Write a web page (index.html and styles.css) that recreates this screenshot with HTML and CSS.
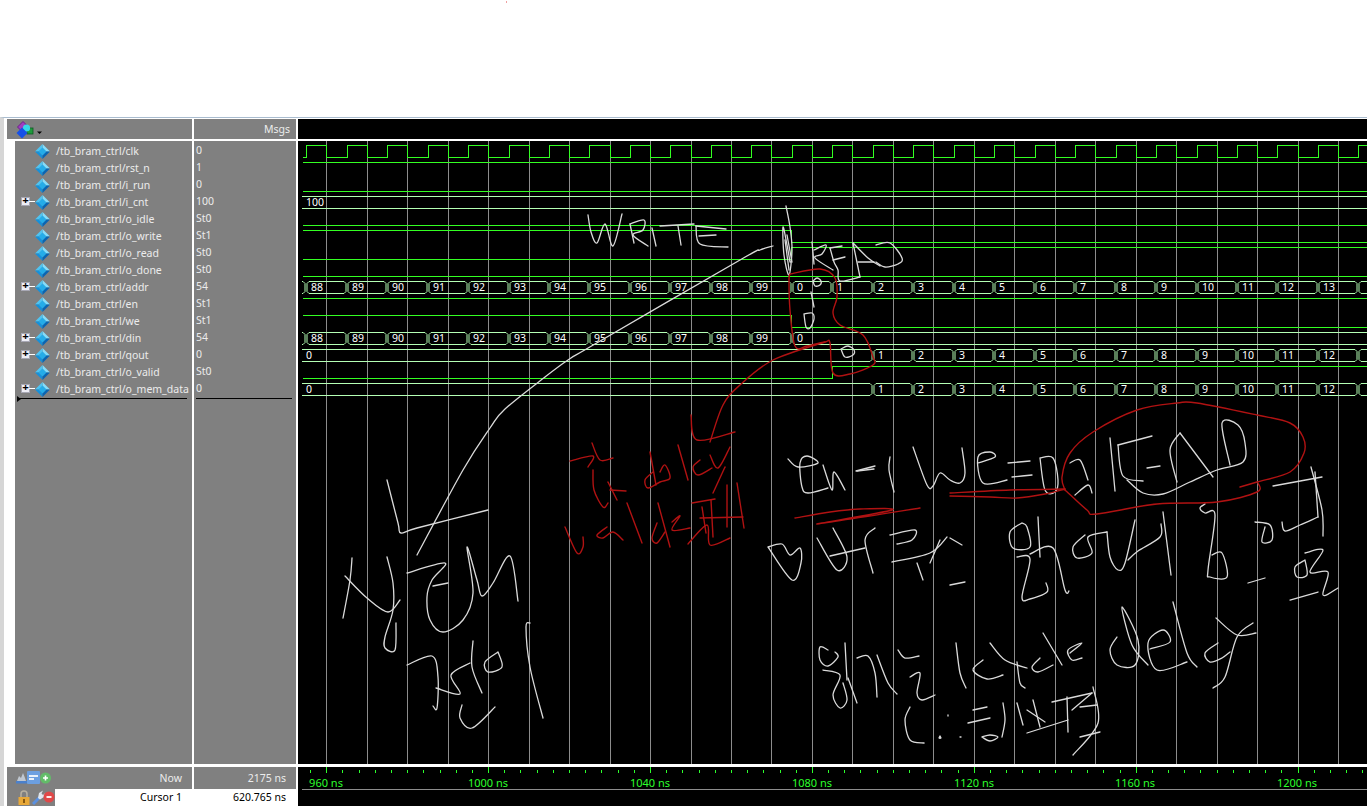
FILE: index.html
```html
<!DOCTYPE html>
<html lang="en">
<head>
    <meta charset="UTF-8">
    <meta name="viewport" content="width=device-width, initial-scale=1.0">
    <title>Wave</title>
    <link rel="stylesheet" href="styles.css">
</head>
<body>
    <svg class="defs" width="0" height="0">
        <symbol id="dia" viewBox="0 0 15 15">
            <polygon points="7.5,0 15,7.5 11,7.5 7.5,4" fill="#86dcfa"/>
            <polygon points="7.5,0 0,7.5 4,7.5 7.5,4" fill="#4fc4f2"/>
            <polygon points="0,7.5 7.5,15 7.5,11 4,7.5" fill="#1590da"/>
            <polygon points="15,7.5 7.5,15 7.5,11 11,7.5" fill="#0a65b2"/>
            <polygon points="7.5,3.5 11.5,7.5 7.5,11.5 3.5,7.5" fill="#25ace8"/>
        </symbol>
    </svg>

    <div class="dot"></div>

    <div class="window">
        <div class="head head-names">
            <svg class="layers" width="28" height="18" viewBox="0 0 28 18">
                <polygon points="7,0.5 12.5,6 7,11.5 1.5,6" fill="#a03cc0" stroke="#6a1f8a"/>
                <rect x="11" y="7" width="6" height="6" fill="#1f9a3c" stroke="#0a5a20" stroke-width="0.8"/>
                <circle cx="10.5" cy="7" r="3.6" fill="#35d8e8"/>
                <polygon points="6,6.5 11.5,12 6,17.5 0.5,12" fill="#1550e8"/>
                <polygon points="21,10.5 26,10.5 23.5,13" fill="#000"/>
            </svg>
        </div>
        <div class="head head-msgs">Msgs</div>
        <div class="head head-wave"></div>

        <div class="names">
            <div class="sig"><span class="slot"></span><svg class="dia"><use href="#dia"/></svg><span>/tb_bram_ctrl/clk</span></div>
            <div class="sig"><span class="slot"></span><svg class="dia"><use href="#dia"/></svg><span>/tb_bram_ctrl/rst_n</span></div>
            <div class="sig"><span class="slot"></span><svg class="dia"><use href="#dia"/></svg><span>/tb_bram_ctrl/i_run</span></div>
            <div class="sig"><span class="slot"><span class="plus">+</span></span><svg class="dia"><use href="#dia"/></svg><span>/tb_bram_ctrl/i_cnt</span></div>
            <div class="sig"><span class="slot"></span><svg class="dia"><use href="#dia"/></svg><span>/tb_bram_ctrl/o_idle</span></div>
            <div class="sig"><span class="slot"></span><svg class="dia"><use href="#dia"/></svg><span>/tb_bram_ctrl/o_write</span></div>
            <div class="sig"><span class="slot"></span><svg class="dia"><use href="#dia"/></svg><span>/tb_bram_ctrl/o_read</span></div>
            <div class="sig"><span class="slot"></span><svg class="dia"><use href="#dia"/></svg><span>/tb_bram_ctrl/o_done</span></div>
            <div class="sig"><span class="slot"><span class="plus">+</span></span><svg class="dia"><use href="#dia"/></svg><span>/tb_bram_ctrl/addr</span></div>
            <div class="sig"><span class="slot"></span><svg class="dia"><use href="#dia"/></svg><span>/tb_bram_ctrl/en</span></div>
            <div class="sig"><span class="slot"></span><svg class="dia"><use href="#dia"/></svg><span>/tb_bram_ctrl/we</span></div>
            <div class="sig"><span class="slot"><span class="plus">+</span></span><svg class="dia"><use href="#dia"/></svg><span>/tb_bram_ctrl/din</span></div>
            <div class="sig"><span class="slot"><span class="plus">+</span></span><svg class="dia"><use href="#dia"/></svg><span>/tb_bram_ctrl/qout</span></div>
            <div class="sig"><span class="slot"></span><svg class="dia"><use href="#dia"/></svg><span>/tb_bram_ctrl/o_valid</span></div>
            <div class="sig"><span class="slot"><span class="plus">+</span></span><svg class="dia"><use href="#dia"/></svg><span>/tb_bram_ctrl/o_mem_data</span></div>
            <div class="endline endline-names"></div>
        </div>

        <div class="values">
            <div class="val">0</div>
            <div class="val">1</div>
            <div class="val">0</div>
            <div class="val">100</div>
            <div class="val">St0</div>
            <div class="val">St1</div>
            <div class="val">St0</div>
            <div class="val">St0</div>
            <div class="val">54</div>
            <div class="val">St1</div>
            <div class="val">St1</div>
            <div class="val">54</div>
            <div class="val">0</div>
            <div class="val">St0</div>
            <div class="val">0</div>
            <div class="endline endline-values"></div>
        </div>

        <div class="wave">
            <svg id="waves" class="wave-svg" viewBox="298 141 1069 623"></svg>
        </div>

        <div class="foot foot-names">
            <div class="foot-row now">
                <div class="tools tools-now">
                    <svg width="36" height="14" viewBox="0 0 36 14">
                        <path d="M1 10 L3 5 L5 7 L7 2 L9 7 L10 10 Z" fill="#c0c8d2"/>
                        <rect x="0" y="10" width="11" height="2.5" fill="#4a80cc"/>
                        <rect x="11" y="0" width="13" height="13" rx="1" fill="#6c9fe0"/>
                        <rect x="13" y="4" width="9" height="2" fill="#e8f0fa"/>
                        <rect x="13" y="7" width="5" height="2" fill="#e8f0fa"/>
                        <circle cx="29.5" cy="7" r="5.5" fill="#62bc68"/>
                        <path d="M27 7 H32 M29.5 4.5 V9.5" stroke="#fff" stroke-width="1.6"/>
                    </svg>
                </div>
                <div class="lbl">Now</div>
            </div>
            <div class="foot-row cursor">
                <div class="tools tools-cursor">
                    <svg width="37" height="15" viewBox="0 0 37 15">
                        <path d="M3 7 V4 A3 3 0 0 1 9 4 V7" fill="none" stroke="#b8b0a0" stroke-width="1.5"/>
                        <rect x="0.5" y="7" width="11" height="8" fill="#e8a838"/>
                        <rect x="5" y="9" width="2" height="4" fill="#8a5a10"/>
                        <path d="M15 14 L22 7" stroke="#5a90e0" stroke-width="3"/>
                        <path d="M20 8 L21 3 L25 0.5 L23.5 3.5 L25 5 L27.5 3 L26 7 L22 9.5 Z" fill="#dfe6ee"/>
                        <circle cx="31" cy="7" r="5.5" fill="#e04848"/>
                        <path d="M28.5 7 H33.5" stroke="#fff" stroke-width="1.8"/>
                    </svg>
                </div>
                <div class="lbl">Cursor 1</div>
            </div>
        </div>
        <div class="foot foot-values">
            <div class="foot-row now"><div class="lbl">2175 ns</div></div>
            <div class="foot-row cursor"><div class="lbl">620.765 ns</div></div>
        </div>
        <div class="foot foot-wave">
            <svg id="scale" class="scale-svg" viewBox="298 767 1069 39"></svg>
        </div>
    </div>

    <script src="waves.js"></script>
</body>
</html>
```

FILE: styles.css
```css
html, body {
    margin: 0;
    height: 806px;
    overflow: hidden;
    background: #fff;
}

body {
    display: flex;
    flex-direction: column;
    font-family: "Noto Sans", "Liberation Sans", sans-serif;
    font-size: 10.5px;
    color: #ececec;
}

.defs {
    position: absolute;
}

.dot {
    position: absolute;
    left: 506px;
    top: 1px;
    width: 1px;
    height: 2px;
    background: #f0a0a0;
}

.window {
    margin-top: 117px;
    flex: 1;
    min-height: 0;
    display: grid;
    grid-template-columns: 185px 102px 1fr;
    grid-template-rows: 20px 623px 40px;
    gap: 2px;
    border-top: 1px solid #a9bccf;
    border-left: 4px solid #d6d6d6;
    padding-top: 1px;
    padding-left: 3px;
    background: #fff;
}

.head {
    background: #808080;
}

.head-names {
    padding: 2px 0 0 9px;
}

.head-msgs {
    text-align: right;
    padding: 3px 6px 0 0;
}

.head-wave {
    background: #000;
}

.names {
    background: #808080;
    border-left: 8px solid #fff;
    padding-top: 1px;
}

.sig {
    height: 17px;
    display: flex;
    align-items: center;
    padding-left: 6px;
    white-space: nowrap;
}

.slot {
    width: 14px;
    height: 15px;
    flex: none;
    display: flex;
    align-items: center;
    position: relative;
}

.slot:has(.plus)::after {
    content: "";
    position: absolute;
    left: 8px;
    right: 0;
    top: 7px;
    height: 1px;
    background: #fff;
}

.plus {
    width: 9px;
    height: 9px;
    background: #eeeef6;
    color: #000;
    font: bold 11px/9px "Liberation Mono", monospace;
    text-align: center;
    outline: 1px solid #a8a8b4;
    outline-offset: -1px;
}

.dia {
    width: 15px;
    height: 15px;
    flex: none;
    margin-top: 1px;
    margin-right: 6px;
}

.endline {
    height: 1px;
    background: #000;
    margin-top: 1px;
    position: relative;
}

.endline-names {
    margin-left: 2px;
    margin-right: 5px;
}

.endline-names::before {
    content: "";
    position: absolute;
    left: 0;
    top: -2px;
    border-left: 4px solid #000;
    border-top: 3px solid transparent;
    border-bottom: 3px solid transparent;
}

.endline-values {
    margin: 1px 4px 0 2px;
}

.values {
    background: #808080;
    padding-top: 1px;
}

.val {
    height: 17px;
    line-height: 17px;
    padding-left: 2px;
}

.wave {
    background: #000;
    overflow: hidden;
}

.wave-svg, .scale-svg {
    display: block;
    width: 100%;
    height: 100%;
}

.foot {
    border-top: 1px solid #fff;
}

.foot-row {
    display: flex;
}

.foot-row.now {
    height: 22px;
    line-height: 22px;
    background: #808080;
}

.foot-row.cursor {
    height: 17px;
    line-height: 17px;
    background: #fff;
    color: #000;
}

.tools {
    width: 48px;
    flex: none;
    background: #808080;
    display: flex;
    align-items: center;
    box-sizing: border-box;
}

.tools-now {
    padding-left: 9px;
}

.tools-cursor {
    padding-left: 11px;
}

.lbl {
    flex: 1;
    text-align: right;
    padding-right: 10px;
}

.foot-wave {
    background: #000;
}

.bus-label {
    font: 10.5px "Noto Sans", "Liberation Sans", sans-serif;
    fill: #fff;
}

.scale-label {
    font: 11px "Noto Sans", "Liberation Sans", sans-serif;
    fill: #2cff2c;
    text-anchor: middle;
}
```

FILE: waves.js
```js
const NS = "http://www.w3.org/2000/svg";
const waves = document.getElementById("waves");
const scale = document.getElementById("scale");

const GREEN = "#33ff22";
const BUS = "#b4ffb4";
const GRID = "#8c8c8c";
const WHITE = "#dadada";
const RED = "#b01212";
const RIGHT = 1367;

function add(parent, tag, attrs, text) {
    const el = document.createElementNS(NS, tag);
    for (const k in attrs) el.setAttribute(k, attrs[k]);
    if (text !== undefined) el.textContent = text;
    parent.appendChild(el);
    return el;
}

function line(d, color) {
    add(waves, "path", { d: d, fill: "none", stroke: color, "shape-rendering": "crispEdges" });
}

function edge(k) {
    return Math.round(306.2 + 40.47 * k);
}

// grid
for (let k = 0; k < 26; k++) {
    const x = Math.round(326.3 + 40.47 * k) + 0.5;
    line(`M${x} 141V764`, GRID);
}

// clk
let clk = "M303 157.5";
for (let k = 0; edge(k) < RIGHT; k++) {
    const up = edge(k) + 0.5;
    const down = Math.round(326.3 + 40.47 * k) + 0.5;
    clk += `H${up}V145.5H${down}V157.5`;
}
line(clk + `H${RIGHT}`, GREEN);

// single bit rows
[162, 191, 225, 276, 298].forEach(y => line(`M303 ${y + 0.5}H${RIGHT}`, GREEN));
line(`M303 230.5H791.5V242.5H${RIGHT}`, GREEN);
line(`M303 259.5H791.5V247.5H${RIGHT}`, GREEN);
line(`M303 315.5H791.5V327.5H${RIGHT}`, GREEN);
line(`M303 378.5H832.5V366.5H${RIGHT}`, GREEN);

// bus rows
function bus(top, segs) {
    const tY = top + 0.5, bY = top + 12.5;
    for (let i = 0; i < segs.length; i++) {
        const a = segs[i].x;
        const b = i + 1 < segs.length ? segs[i + 1].x : RIGHT + 10;
        const right = `H${b - 3}L${b - 1} ${tY + 2}V${bY - 2}L${b - 3} ${bY}`;
        const d = a > 303 ? `M${a + 3} ${tY}${right}H${a + 3}L${a + 1} ${bY - 2}V${tY + 2}Z`
                          : `M${a} ${tY}${right}H${a}`;
        add(waves, "path", { d: d, fill: "none", stroke: BUS });
        // the last value starts right at the pane's edge, no room for a label
        if (segs[i].v !== "" && a + 20 < RIGHT) {
            add(waves, "text", { x: a > 303 ? a + 5 : a + 4, y: top + 10, class: "bus-label" }, segs[i].v);
        }
    }
}

function counted(startVal, k0, stopAt) {
    const out = [];
    let v = startVal;
    for (let k = k0; edge(k) < RIGHT && (stopAt === undefined || k <= stopAt); k++) {
        out.push({ x: edge(k), v: String(v) });
        v = v === 99 ? 0 : v + 1;
    }
    return out;
}

bus(196, [{ x: 302, v: "100" }]);
bus(281, [{ x: 302, v: "" }].concat(counted(88, 0)));
bus(332, [{ x: 302, v: "" }].concat(counted(88, 0, 12)));
bus(349, [{ x: 302, v: "0" }].concat(counted(1, 14)));
bus(383, [{ x: 302, v: "0" }].concat(counted(1, 14)));

// hand drawn notes, points in page coordinates
function stroke(points, color, width) {
    let d = `M${points[0]} ${points[1]}`;
    const n = points.length / 2;
    const p = i => {
        const j = Math.max(0, Math.min(n - 1, i));
        return [points[j * 2], points[j * 2 + 1]];
    };
    for (let i = 0; i < n - 1; i++) {
        const [x0, y0] = p(i - 1), [x1, y1] = p(i), [x2, y2] = p(i + 1), [x3, y3] = p(i + 2);
        const c1x = x1 + (x2 - x0) / 6, c1y = y1 + (y2 - y0) / 6;
        const c2x = x2 - (x3 - x1) / 6, c2y = y2 - (y3 - y1) / 6;
        d += `C${c1x.toFixed(1)} ${c1y.toFixed(1)} ${c2x.toFixed(1)} ${c2y.toFixed(1)} ${x2} ${y2}`;
    }
    add(waves, "path", { d: d, fill: "none", stroke: color, "stroke-width": width, "stroke-linecap": "round", "stroke-linejoin": "round" });
}

const whiteNotes = [
    // long arrow line
    [417,555, 463,470, 490,428, 505,409, 545,377, 568,360, 595,344, 740,260, 760,250, 773,246],
    // WRITE
    [588,215, 591,232, 597,243, 605,224, 613,246, 622,214],
    [630,224, 634,243], [630,224, 644,220, 643,230, 633,235, 648,246],
    [652,228, 656,246],
    [660,226, 694,224], [678,226, 681,245],
    [696,226, 726,229], [696,226, 700,244, 728,247], [699,236, 716,235],
    // tangle by the edge
    [786,206, 790,227, 792,250, 789,275, 784,255, 783,227, 787,245, 790,262], [787,235, 792,262], [785,240, 789,270],
    // READ small
    [812,242, 814,264], [814,250, 826,245, 822,254, 815,258, 833,270],
    [830,248, 842,246], [830,248, 834,262, 838,270, 840,281, 860,277], [833,260, 845,257],
    [853,243, 860,277], [853,243, 868,258, 880,266], [858,262, 874,262],
    [876,245, 890,243, 902,258, 898,264, 885,267, 876,262],
    // marks in the waves
    [813,281, 817,278, 821,281, 820,285, 815,286, 813,281],
    [811,292, 814,307],
    [804,314, 812,313, 814,319, 810,328, 806,327, 804,314],
    [841,349, 848,346, 854,350, 853,355, 845,357, 841,349],
    // en = 1 we = 0
    [788,459, 798,467, 818,463, 807,456, 800,463, 802,487, 808,493, 828,488],
    [823,465, 832,490, 834,472, 845,490],
    [856,471, 875,466], [857,471, 874,469],
    [890,457, 889,470, 894,492],
    [913,447, 927,485, 933,486, 940,473, 950,480, 960,483, 965,473, 962,448],
    [978,463, 995,457, 990,452, 978,457, 983,483, 1007,480],
    [1008,463, 1030,461], [1012,477, 1032,475],
    [1040,458, 1053,458, 1058,480, 1055,492, 1045,490, 1040,458],
    [1070,463, 1080,460, 1088,480], [1075,495, 1088,485, 1092,493],
    // READ big
    [1110,438, 1115,491],
    [1118,445, 1152,436], [1118,445, 1123,476, 1143,481],
    [1147,468, 1160,466],
    [1127,480, 1143,493, 1163,494, 1190,482, 1217,470, 1243,462, 1245,443, 1238,425, 1222,423, 1230,465],
    [1180,433, 1170,450, 1177,482], [1180,433, 1213,477],
    // right of the loop
    [1273,486, 1322,477], [1311,467, 1322,510, 1323,536], [1315,472, 1318,517],
    [1282,522, 1285,531, 1300,525, 1318,517],
    [1255,522, 1270,525, 1272,540, 1262,542, 1265,527],
    [1205,504, 1200,508, 1205,513, 1215,515, 1208,570, 1210,577, 1227,577, 1222,553, 1212,555],
    [1248,583, 1265,578],
    [1305,560, 1295,567, 1297,577, 1307,575, 1305,560],
    [1305,553, 1323,550, 1310,572, 1328,572, 1323,595, 1338,588],
    [1290,600, 1318,592],
    [950,585, 965,582],
    [950,538, 962,545],
    // second line of notes
    [768,547, 782,544, 790,555, 800,548, 801,563, 792,580, 768,547],
    [817,538, 837,570, 847,557, 833,528], [830,556, 865,548],
    [875,528, 865,540, 873,573],
    [890,535, 915,530, 912,540, 897,544],
    [892,562, 930,553, 947,537], [940,540, 930,563],
    [917,563, 923,580],
    [1022,523, 1010,532, 1013,548, 1030,547, 1027,527, 1022,523],
    [1038,517, 1040,557],
    [1017,557, 1030,559, 1022,597, 1030,599, 1047,592, 1046,583],
    [1030,554, 1053,548, 1065,590, 1069,591],
    [1085,535, 1073,547, 1077,558, 1092,553, 1088,537, 1107,532],
    [1107,532, 1110,557, 1118,570, 1125,563, 1135,520],
    [1128,560, 1138,551, 1160,537, 1161,524],
    [1163,512, 1171,575],
    // 1 cycle delay line
    [828,650, 820,647, 820,660, 828,666, 838,657, 835,652],
    [845,643, 847,680],
    [823,670, 840,675, 833,695, 840,708, 847,700, 843,683],
    [848,678, 857,703],
    [857,658, 868,656, 875,673, 877,697],
    [877,655, 888,683, 897,694],
    [898,650, 905,658, 919,656],
    [910,677, 920,673, 917,693, 922,700, 935,695],
    [956,643, 960,673, 966,688],
    [983,660, 973,670, 987,679, 1003,675],
    [990,643, 1005,660, 1027,668],
    [1017,662, 1020,683, 1025,688],
    [1040,658, 1032,667, 1038,672, 1053,665],
    [1043,633, 1062,665],
    [1070,653, 1082,643, 1068,650, 1072,660, 1082,658],
    [1117,637, 1110,650, 1117,665, 1135,665, 1138,640, 1122,607, 1132,645, 1148,665],
    [1150,649, 1170,642, 1163,630, 1148,643, 1157,670, 1187,662],
    [1173,602, 1187,653, 1197,667],
    [1218,643, 1205,653, 1210,662, 1222,658, 1230,652],
    [1216,618, 1237,635, 1256,633],
    [1253,623, 1237,637, 1225,677, 1213,688],
    // bottom bracket line
    [910,707, 905,720, 910,740, 924,743],
    [940,736, 941,738, 939,738, 940,736],
    [948,715, 948,716],
    [960,737, 961,737],
    [973,710, 987,707], [968,723, 990,718],
    [982,737, 990,735, 998,737, 990,741, 982,737],
    [1003,703, 1005,720, 1002,737],
    [1017,703, 1023,725],
    [1027,710, 1045,722],
    [1027,733, 1068,720],
    [1033,700, 1040,727],
    [1052,702, 1092,693], [1072,710, 1092,693],
    [1067,697, 1068,732],
    [1080,707, 1097,705],
    [1093,687, 1098,723, 1073,755],
    [1080,737, 1100,732],
    // bottom left notes
    [387,480, 398,523, 401,533, 417,528, 488,510],
    [407,573, 445,563, 432,580, 427,597, 430,620, 443,632, 463,620, 473,593, 467,547, 477,580, 482,596, 493,583, 510,556, 518,601],
    [433,586, 448,583],
    [352,558, 350,580, 343,618],
    [345,576, 367,598, 388,612, 400,600],
    [387,557, 393,583, 393,610, 385,637, 385,648, 395,650, 396,623],
    [407,665, 432,656, 438,677, 437,708, 433,706],
    [436,688, 460,694, 451,675, 470,663],
    [473,641, 472,667, 482,693],
    [498,652, 485,662, 488,672, 502,667, 498,652],
    [462,705, 460,718, 472,728, 495,707],
    [530,623, 526,627, 530,667, 543,718]
];

const redNotes = [
    // loop round the edge
    [790,274, 820,269, 835,278, 837,297, 833,313, 840,325, 863,335, 873,357, 873,365, 850,374, 833,373, 830,343, 825,342, 807,346, 795,346, 790,310, 789,280, 790,274],
    // arrow to the note
    [825,342, 773,360, 740,385, 723,405, 710,442],
    [691,415, 697,440, 735,432],
    // note
    [570,461, 593,456, 588,467],
    [592,443, 600,460, 613,458],
    [593,470, 594,490, 603,507, 608,503],
    [608,482, 617,500], [610,490, 626,491],
    [650,452, 656,485], [653,472, 645,480, 648,488, 660,482, 670,478, 665,465, 660,472],
    [678,445, 688,480],
    [700,460, 693,467, 698,475, 712,468],
    [710,455, 718,468, 730,447], [725,467, 713,493],
    [565,527, 577,553, 583,547, 583,537],
    [607,527, 597,535, 603,538, 613,532, 623,540],
    [627,503, 642,543],
    [658,503, 670,547], [657,523, 652,538, 657,543, 665,532],
    [672,522, 680,516, 672,530, 690,528],
    [692,503, 715,499], [700,518, 743,517], [702,507, 706,533], [711,500, 713,537],
    [688,544, 707,525, 710,545, 730,538],
    [727,485, 727,527], [737,483, 744,528],
    // underlines
    [795,518, 830,512, 860,509, 892,510, 817,524, 920,508],
    [950,493, 1010,490, 1065,489], [950,496, 990,497, 1017,498, 1045,494, 1065,489],
    // big loop
    [1065,490, 1062,477, 1070,453, 1093,432, 1137,410, 1177,403, 1197,403, 1257,415, 1290,423, 1303,437, 1304,453, 1290,472, 1257,482, 1240,487],
    [1258,483, 1257,492, 1217,502, 1157,504, 1097,514, 1087,510, 1065,490]
];

whiteNotes.forEach(s => stroke(s, WHITE, 1.3));
redNotes.forEach(s => stroke(s, RED, 1.4));

// time scale
for (let i = 0; i < 66; i++) {
    const x = Math.round(310 + 16.19 * i) + 0.5;
    const tall = (i - 1) % 10 === 0;
    add(scale, "path", { d: `M${x} ${tall ? 767 : 770}V773`, stroke: "#2cff2c", "shape-rendering": "crispEdges" });
}
[[326, "960 ns"], [488, "1000 ns"], [650, "1040 ns"], [812, "1080 ns"], [974, "1120 ns"], [1135, "1160 ns"], [1297, "1200 ns"]].forEach(([x, t]) => {
    add(scale, "text", { x: x, y: 787, class: "scale-label" }, t);
});
add(scale, "path", { d: `M302 789.5H${RIGHT}`, stroke: GRID, "shape-rendering": "crispEdges" });
```
